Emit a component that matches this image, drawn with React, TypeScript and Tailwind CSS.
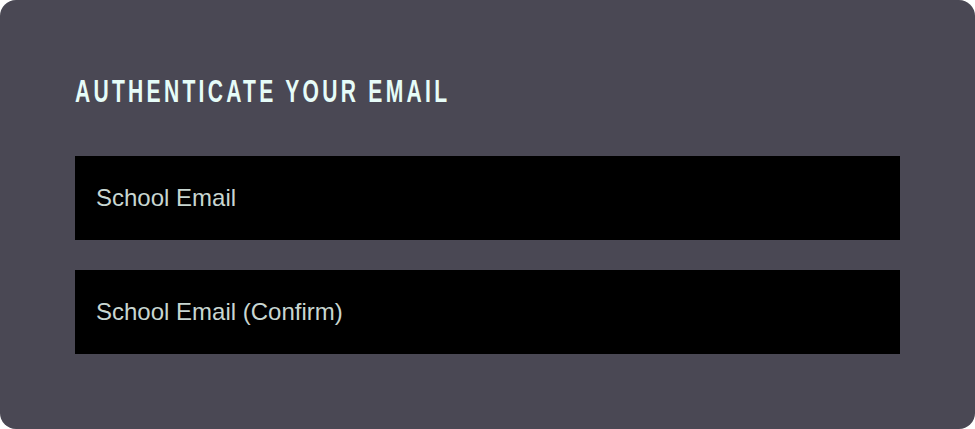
export default function App() {
  return (
    <div className="w-[975px] h-[429px] bg-white">
      <div className="h-full rounded-2xl bg-[#4a4854] p-[75px] flex flex-col">
        {/* condensed display heading, squeezed from Liberation Sans */}
        <h2 className="origin-left scale-x-[0.68] whitespace-nowrap text-[31px] leading-[34px] font-bold tracking-[4.8px] text-[#e6fcf8] uppercase mb-[47px] font-['Liberation_Sans',sans-serif]">
          Authenticate your email
        </h2>
        <div className="flex flex-col gap-[30px]">
          <input
            type="email"
            placeholder="School Email"
            className="h-[84px] w-full bg-black px-[21px] text-[24px] text-white placeholder:text-[#c8d6d1] outline-none font-['Liberation_Sans',sans-serif]"
          />
          <input
            type="email"
            placeholder="School Email (Confirm)"
            className="h-[84px] w-full bg-black px-[21px] text-[24px] text-white placeholder:text-[#c8d6d1] outline-none font-['Liberation_Sans',sans-serif]"
          />
        </div>
      </div>
    </div>
  )
}
